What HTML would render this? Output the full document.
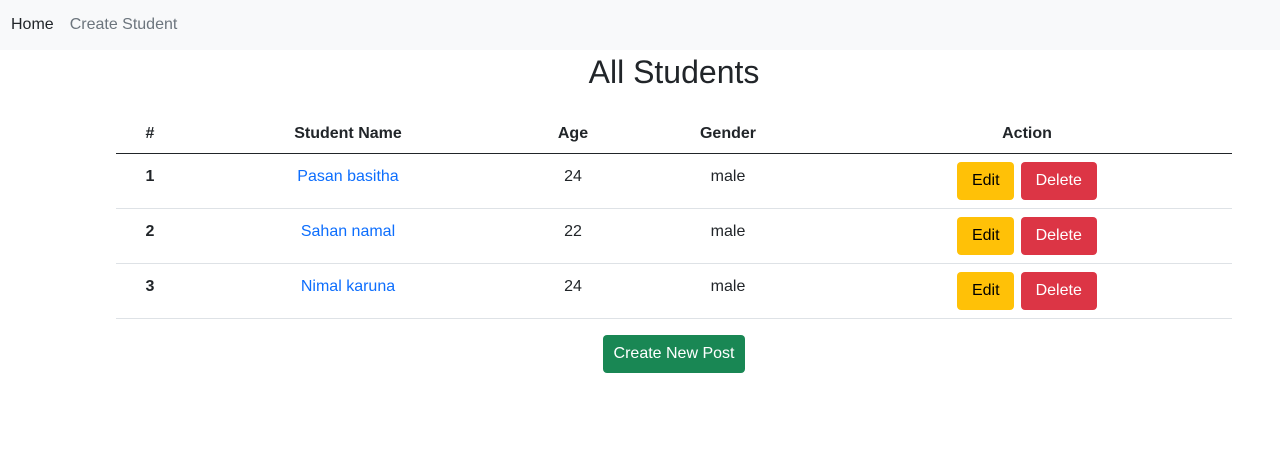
<!DOCTYPE html>
<html><head><meta charset="utf-8"><style>
*{box-sizing:border-box}
body{margin:0;font-family:"Liberation Sans",sans-serif;font-size:16px;color:#212529;background:#fff}
.nav{height:50px;background:#f8f9fa;display:flex;align-items:center;padding-left:11px}
.nav a{text-decoration:none;margin-right:16px;font-size:16px}
h1{margin:2px 0 0;text-align:center;font-size:32px;font-weight:500;height:40px;line-height:40px;padding-left:68px}
table{position:absolute;left:116px;top:113px;width:1116px;border-collapse:collapse;text-align:center}
th{font-weight:bold;height:40px;border-bottom:1px solid #212529;vertical-align:middle;padding-top:4px}
td{height:55px;border-bottom:1px solid #dee2e6;vertical-align:top;padding-top:14px}
td.n{font-weight:bold}
td a{color:#0d6efd;text-decoration:none}
.btn{display:inline-block;height:38px;line-height:38px;border-radius:4px;font-size:16px;text-align:center;padding:0}
td .btn{margin-top:-6px}
.e{background:#ffc107;color:#000;width:57px}
.d{background:#dc3545;color:#fff;width:76px;margin-left:2px}
.c{position:absolute;left:603px;top:335px;width:142px;background:#198754;color:#fff}
</style></head><body>
<div class="nav"><a style="color:#212529">Home</a><a style="color:#6c757d">Create Student</a></div>
<h1>All Students</h1>
<table>
<colgroup><col style="width:68px"><col style="width:328px"><col style="width:122px"><col style="width:188px"><col style="width:410px"></colgroup>
<tr><th>#</th><th>Student Name</th><th>Age</th><th>Gender</th><th>Action</th></tr>
<tr><td class="n">1</td><td><a>Pasan basitha</a></td><td>24</td><td>male</td><td><span class="btn e">Edit</span> <span class="btn d">Delete</span></td></tr>
<tr><td class="n">2</td><td><a>Sahan namal</a></td><td>22</td><td>male</td><td><span class="btn e">Edit</span> <span class="btn d">Delete</span></td></tr>
<tr><td class="n">3</td><td><a>Nimal karuna</a></td><td>24</td><td>male</td><td><span class="btn e">Edit</span> <span class="btn d">Delete</span></td></tr>
</table>
<span class="btn c">Create New Post</span>
</body></html>
